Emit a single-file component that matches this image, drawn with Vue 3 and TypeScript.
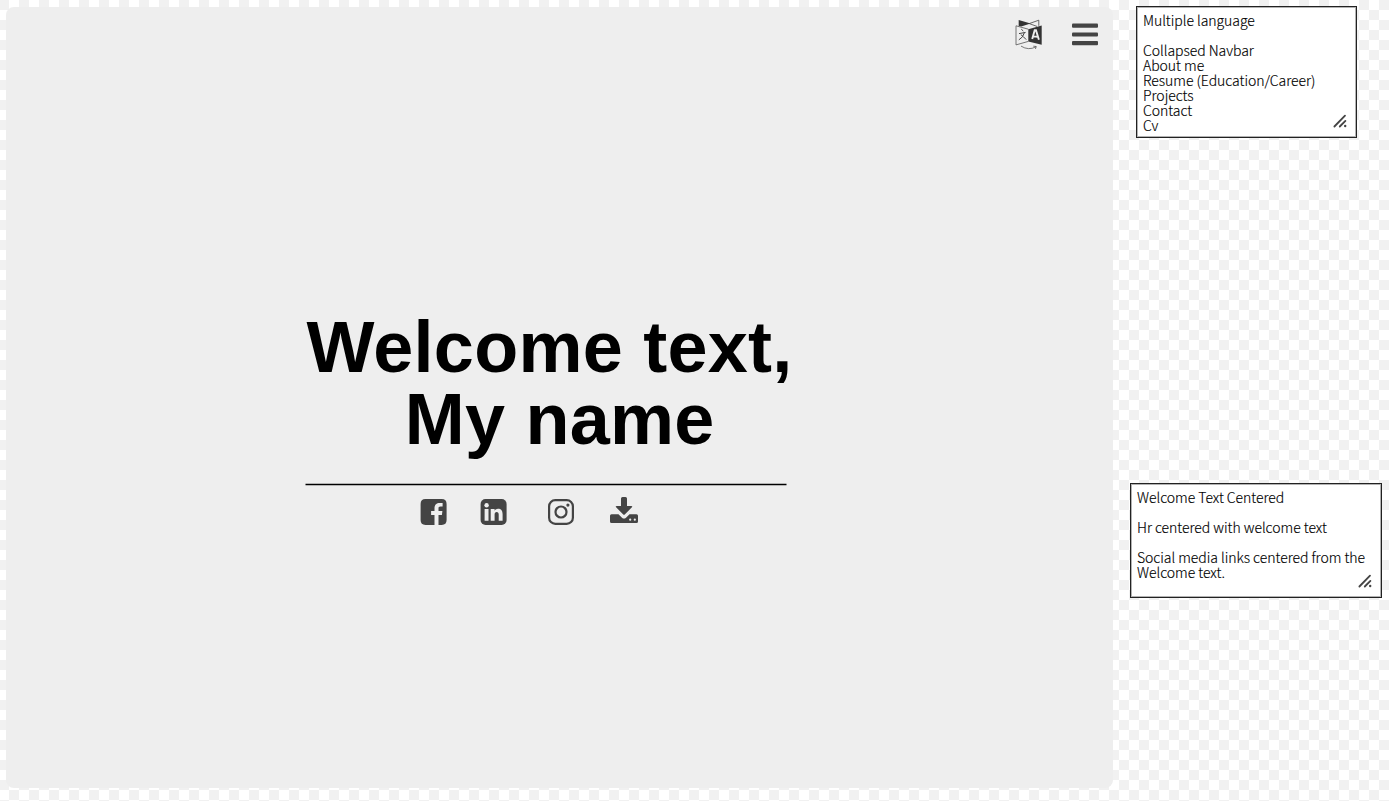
<script setup lang="ts">
interface Note {
  id: string
  lines: string[]
}

const notes: Note[] = [
  {
    id: 'menu',
    lines: ['Multiple language', '', 'Collapsed Navbar', 'About me', 'Resume (Education/Career)', 'Projects', 'Contact', 'Cv'],
  },
  {
    id: 'welcome',
    lines: ['Welcome Text Centered', '', 'Hr centered with welcome text', '', 'Social media links centered from the', 'Welcome text.'],
  },
]
</script>

<template>
  <div class="canvas">
    <main class="frame">
      <nav class="bar">
        <svg class="language" viewBox="0 0 28 31" width="28" height="31">
          <path d="M3.7 1 15.6 4.6 6.2 7.6 3.7 6.9Z" fill="#333" />
          <path d="M14.2 4.6 23.8 1.2V6.8M14.2 4.6 22 7.4" fill="none" stroke="#444" stroke-width=".8" />
          <path d="M13.3 10.2 1 6.8V25.9L13.3 22.4" fill="none" stroke="#555" stroke-width=".8" />
          <path d="M13.3 10.2 26.7 6.6V25.7L13.3 22.6Z" fill="#333" />
          <path d="M6.3 10.2 8.3 12M4 14.6 10.6 13.4M9.3 13.8Q8.4 18.3 3.8 20.9M5.8 15.6Q8 17.2 11.2 20.6" fill="none" stroke="#444" stroke-width="1" />
          <path d="M17.2 20 19.7 11.2H21L23.9 20.7M18.2 17.4 22.8 17.8" fill="none" stroke="#eee" stroke-width="1.9" />
          <path d="M6 27.1Q13.5 31.8 21 27.8M18.3 27.2 21.3 27.5 20.4 30" fill="none" stroke="#444" stroke-width=".7" />
        </svg>
        <svg class="burger" viewBox="0 0 28 24" width="28" height="24">
          <g fill="#444"><rect x="1" y=".6" width="26" height="4.2" rx="1" /><rect x="1" y="9.4" width="26" height="4.1" rx="1" /><rect x="1" y="18.1" width="26" height="4.2" rx="1" /></g>
        </svg>
      </nav>
      <section class="hero">
        <h1>Welcome text,<br />&nbsp;My name</h1>
        <svg class="rule" viewBox="0 0 482 3" width="482" height="3">
          <path d="M.5 1.5H481.5" stroke="#000" stroke-width="1.4" />
        </svg>
        <div class="links">
          <svg viewBox="0.4 0 26 26" width="26" height="26">
            <path fill="#444" d="M4.9 0H21.1Q26 0 26 4.9V21.1Q26 26 21.1 26H17.9V16H21.3L21.8 12H17.9V9.5C17.9 8.3 18.3 7.6 19.9 7.6H22V4.1C21.6 4 20.4 3.9 19 3.9C16 3.9 13.9 5.8 13.9 9.1V12H10.5V16H13.9V26H4.9Q0 26 0 21.1V4.9Q0 0 4.9 0Z" />
          </svg>
          <svg viewBox="0.4 0 26 26" width="26" height="26">
            <rect width="26" height="26" rx="4.9" fill="#444" />
            <g fill="#eee"><circle cx="6" cy="6.3" r="2.2" /><path d="M4 10H7.9V21.8H4ZM10.1 10H14V11.7C14.8 10.5 16 9.8 17.6 9.8C20.4 9.8 22 11.7 22 15V21.8H18.1V15.6C18.1 14 17.4 13.1 16.1 13.1C14.7 13.1 14 14.1 14 15.6V21.8H10.1Z" /></g>
          </svg>
          <svg viewBox="0 0 26 26" width="26" height="26">
            <g fill="none" stroke="#444" stroke-width="2.2"><rect x="1.1" y="1.1" width="23.8" height="23.8" rx="6.2" /><circle cx="13" cy="13" r="5.5" /></g>
            <circle cx="19.9" cy="6.1" r="1.6" fill="#444" />
          </svg>
          <svg class="download" viewBox="0 0 28 26" width="28" height="26">
            <path fill="#444" d="M1.5 17.2H8.5L12 20.7Q14 22.4 16 20.7L19.5 17.2H26.5Q28 17.2 28 18.7V24.5Q28 26 26.5 26H1.5Q0 26 0 24.5V18.7Q0 17.2 1.5 17.2ZM12.5 0H15.5Q17 0 17 1.5V9H21.4Q23 9 21.9 10.3L15 17.2Q14 18.2 13 17.2L6.1 10.3Q5 9 6.6 9H11V1.5Q11 0 12.5 0Z" />
            <circle cx="20.2" cy="22.7" r="1.1" fill="#eee" /><circle cx="24.8" cy="22.7" r="1.1" fill="#eee" />
          </svg>
        </div>
      </section>
    </main>
    <aside v-for="note in notes" :key="note.id" class="note" :class="note.id">
      <p>{{ note.lines.join('\n') }}</p>
      <svg class="grip" viewBox="0 0 14 14" width="14" height="14">
        <path d="M1.4 12.5 12 1.7M6.8 12.5 12.4 6.9" stroke="#444" stroke-width="1.8" stroke-linecap="round" />
        <circle cx="12.2" cy="12" r="1.2" fill="#444" />
      </svg>
    </aside>
  </div>
</template>

<style>
body {
  margin: 0;
  overflow: hidden;
}
</style>

<style scoped>
.canvas {
  position: relative;
  box-sizing: border-box;
  width: 1389px;
  height: 801px;
  padding: 7px 0 0 6px;
  overflow: hidden;
  background: repeating-conic-gradient(#f1f1f1 0 25%, #fff 0 50%) 9px 0 / 20px 20px;
}
.frame {
  width: 1107px;
  height: 781px;
  border-radius: 8px;
  background: #eee;
}
.bar {
  display: flex;
  justify-content: flex-end;
  align-items: center;
  gap: 28px;
  height: 55px;
  padding-right: 14px;
}
.hero {
  display: flex;
  flex-direction: column;
  width: 489px;
  margin: 249px 0 0 299px;
}
h1 {
  margin: 0;
  text-align: center;
  white-space: nowrap;
  font: bold 72px/72px "Liberation Sans", Arial, sans-serif;
  letter-spacing: 0.26px;
  color: #000;
}
.rule {
  display: block;
  margin-top: 28px;
}
.links {
  display: flex;
  align-items: flex-start;
  margin: 13px 0 0 116px;
}
.links svg {
  overflow: visible;
}
.links svg + svg {
  margin-left: 34px;
}
.links svg:nth-child(3) {
  margin-left: 41px;
}
.links .download {
  margin-top: -2px;
  margin-left: 36px;
}
.note {
  position: absolute;
  box-sizing: border-box;
  border: 1px solid #222;
  outline: 1px solid rgba(0, 0, 0, 0.3);
  outline-offset: -2px;
  background: #fff;
  font: 300 14px/15px "Noto Sans CJK JP", sans-serif;
  letter-spacing: -0.04px;
  color: #000;
  -webkit-text-stroke: 0.15px #000;
}
.note p {
  margin: 0;
  white-space: pre;
}
.note.menu {
  left: 1136px;
  top: 6px;
  width: 221px;
  height: 132px;
  padding: 6px;
}
.note.welcome {
  left: 1130px;
  top: 483px;
  width: 252px;
  height: 115px;
  padding: 6px;
}
.grip {
  position: absolute;
  right: 9px;
  bottom: 9px;
}
</style>
